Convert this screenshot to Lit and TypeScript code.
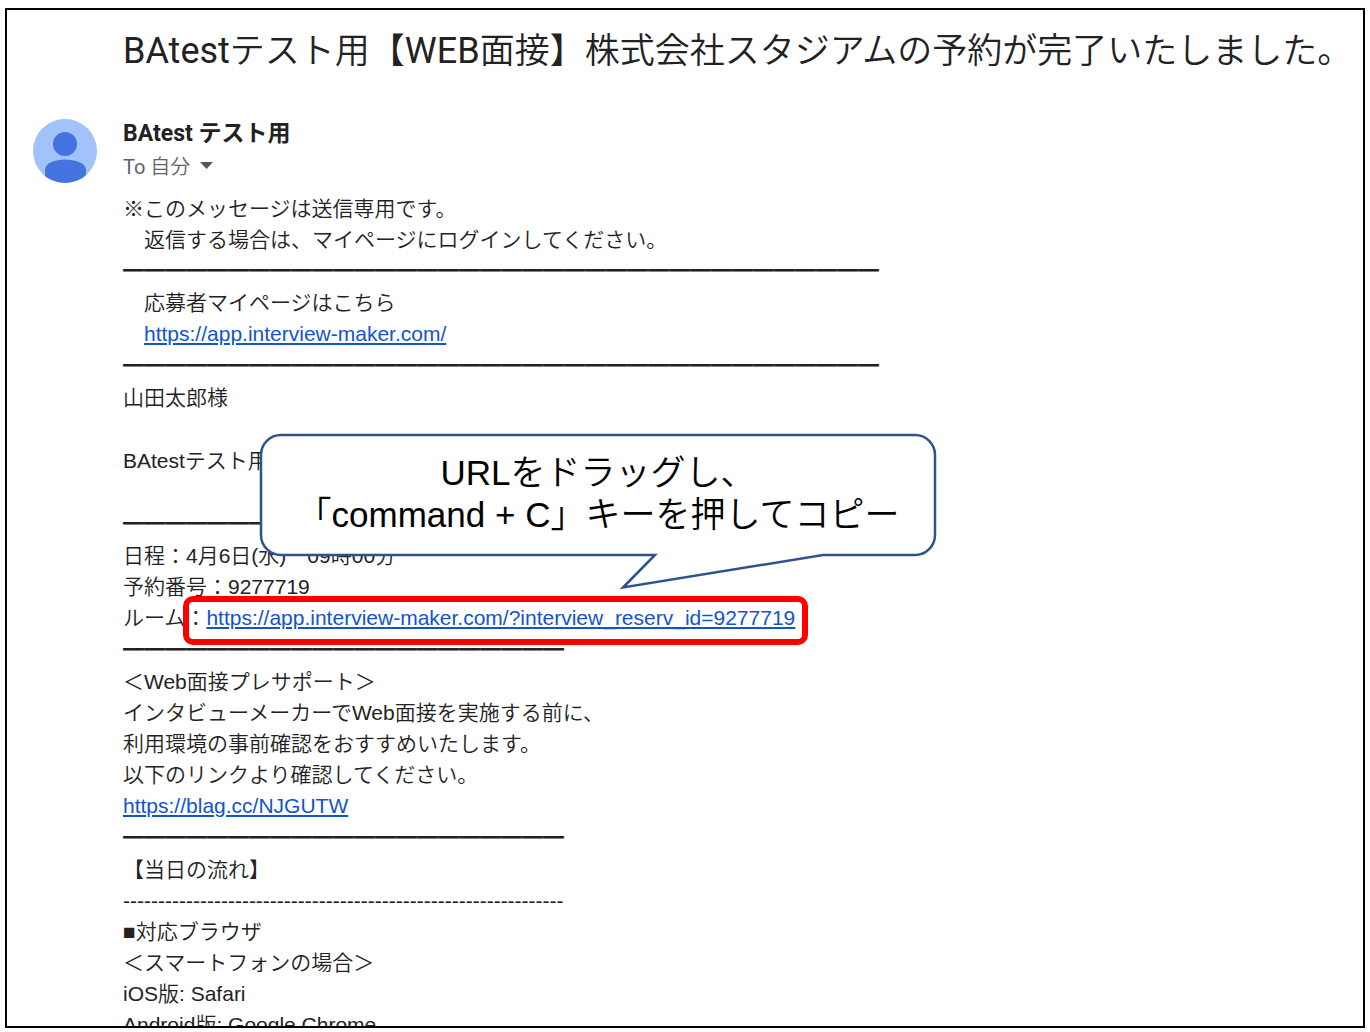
import { LitElement, html, css, svg, nothing } from "lit";
import { customElement, property } from "lit/decorators.js";

type Line =
  | { kind: "text"; text: string }
  | { kind: "rule"; text: string }
  | { kind: "link"; lead: string; href: string; marked?: boolean };

const text = (value: string): Line => ({ kind: "text", text: value });
const rule = (count: number): Line => ({ kind: "rule", text: "━".repeat(count) });
const link = (lead: string, href: string, marked = false): Line => ({ kind: "link", lead, href, marked });

const LINES: Line[] = [
  text("※このメッセージは送信専用です。"),
  text("　返信する場合は、マイページにログインしてください。"),
  rule(36),
  text("　応募者マイページはこちら"),
  link("　", "https://app.interview-maker.com/"),
  rule(36),
  text("山田太郎様"),
  { kind: "rule", text: "" },
  text("BAtestテスト用"),
  { kind: "rule", text: "" },
  rule(21),
  text("日程：4月6日(水)　09時00分"),
  text("予約番号：9277719"),
  link("ルーム：", "https://app.interview-maker.com/?interview_reserv_id=9277719", true),
  rule(21),
  text("＜Web面接プレサポート＞"),
  text("インタビューメーカーでWeb面接を実施する前に、"),
  text("利用環境の事前確認をおすすめいたします。"),
  text("以下のリンクより確認してください。"),
  link("", "https://blag.cc/NJGUTW"),
  rule(21),
  text("【当日の流れ】"),
  text("-".repeat(63)),
  text("■対応ブラウザ"),
  text("＜スマートフォンの場合＞"),
  text("iOS版: Safari"),
  text("Android版: Google Chrome"),
];

@customElement("mail-avatar")
export class MailAvatar extends LitElement {
  static styles = css`
    :host { display: block; }
    .face { display: block; width: 100%; }
  `;

  render() {
    return html`<svg class="face" viewBox="0 0 64 64" aria-hidden="true">
      ${svg`
        <defs><clipPath id="disc"><circle cx="32" cy="32" r="32" /></clipPath></defs>
        <circle cx="32" cy="32" r="32" fill="#a1c2fa" />
        <g clip-path="url(#disc)" fill="#4374e0">
          <circle cx="32" cy="25" r="12" />
          <path d="M12 66V51C12 44 22 40.500 32 40.500S53 44 53 51V66Z" />
        </g>`}
    </svg>`;
  }
}

@customElement("speech-callout")
export class SpeechCallout extends LitElement {
  static styles = css`
    :host { display: block; position: relative; width: 676px; height: 122px; }
    .shape { position: absolute; top: 0; left: 0; overflow: visible; }
    .words {
      position: relative;
      margin: 0;
      padding-top: 18px;
      text-align: center;
      white-space: nowrap;
      font-size: 35px;
      line-height: 42px;
      font-weight: 350;
      color: #000;
    }
  `;

  render() {
    return html`
      <svg class="shape" width="676" height="156" viewBox="0 0 676 156" aria-hidden="true">
        ${svg`<path d="M21 1H655A20 20 0 0 1 675 21V101A20 20 0 0 1 655 121H563L363 153.500L395 121H21A20 20 0 0 1 1 101V21A20 20 0 0 1 21 1Z"
          fill="#fff" stroke="#2f528f" stroke-width="2.500" />`}
      </svg>
      <p class="words">URLをドラッグし、<br />「command + C」キーを押してコピー</p>
    `;
  }
}

@customElement("mail-body")
export class MailBody extends LitElement {
  @property({ attribute: false }) lines: Line[] = [];

  static styles = css`
    :host { display: block; position: relative; }
    .line {
      margin: 0;
      height: 31px;
      line-height: 31px;
      white-space: pre;
      font-weight: 350;
    }
    .spaced { height: 32px; line-height: 32px; }
    .heavy { line-height: 28px; font-family: "Noto Sans CJK JP", sans-serif; font-weight: 400; }
    .link { color: #1155cc; text-decoration: underline; }
    .marked { position: relative; }
    .marked::after {
      content: "";
      position: absolute;
      inset: -10px -13px -16px -23px;
      border: 6px solid #ff0000;
      border-radius: 10px;
      pointer-events: none;
    }
    .callout { position: absolute; top: 241px; left: 137px; }
  `;

  private renderLine(line: Line) {
    if (line.kind === "text") return html`<p class="line">${line.text}</p>`;
    if (line.kind === "rule") {
      return html`<p class="line spaced ${line.text ? "heavy" : ""}">${line.text}</p>`;
    }
    return html`<p class="line spaced">${line.lead || nothing}<a
      class="link ${line.marked ? "marked" : ""}" href=${line.href}>${line.href}</a></p>`;
  }

  render() {
    return html`
      ${this.lines.map((line) => this.renderLine(line))}
      <speech-callout class="callout"></speech-callout>
    `;
  }
}

@customElement("app-root")
export class AppRoot extends LitElement {
  static styles = css`
    :host {
      display: flex;
      box-sizing: border-box;
      height: 100vh;
      padding: 8px 5px 4px;
      background: #fff;
      color: #222;
      font-family: "Liberation Sans", "Noto Sans CJK JP", sans-serif;
      font-size: 21px;
    }
    .frame {
      flex: 1;
      min-width: 0;
      box-sizing: border-box;
      border: 2px solid #000;
      overflow: hidden;
      padding: 19px 0 0 26px;
      display: grid;
      grid-template-columns: 64px 1fr;
      column-gap: 26px;
      align-content: start;
    }
    .subject {
      grid-column: 2;
      margin: 0 0 45px;
      font-family: Roboto, "Noto Sans CJK JP", sans-serif;
      font-size: 35px;
      line-height: 44px;
      font-weight: 350;
      white-space: nowrap;
    }
    .subject .latin { font-size: 36px; }
    .latin { font-weight: 400; }
    .sender {
      margin: 0;
      font-family: Roboto, "Noto Sans CJK JP", sans-serif;
      font-size: 23px;
      line-height: 30px;
      font-weight: 700;
    }
    .to {
      display: flex;
      align-items: center;
      gap: 10px;
      height: 32px;
      margin-bottom: 12px;
      padding: 0;
      border: 0;
      background: none;
      color: #5f6368;
      font-family: Roboto, "Noto Sans CJK JP", sans-serif;
      font-size: 20px;
      font-weight: 350;
    }
    .caret { display: block; }
    .body { grid-column: 2; }
  `;

  render() {
    return html`
      <main class="frame" lang="ja">
        <h1 class="subject"><span class="latin">BAtest</span>テスト用【<span class="latin">WEB</span>面接】株式会社スタジアムの予約が完了いたしました。</h1>
        <mail-avatar></mail-avatar>
        <header>
          <h2 class="sender">BAtest テスト用</h2>
          <button class="to" type="button">
            <span><span class="latin">To</span> 自分</span>
            <svg class="caret" width="13" height="7" viewBox="0 0 13 7" aria-hidden="true">
              <path d="M0 0H13L6.500 7Z" fill="#555" />
            </svg>
          </button>
        </header>
        <mail-body class="body" .lines=${LINES}></mail-body>
      </main>
    `;
  }
}
